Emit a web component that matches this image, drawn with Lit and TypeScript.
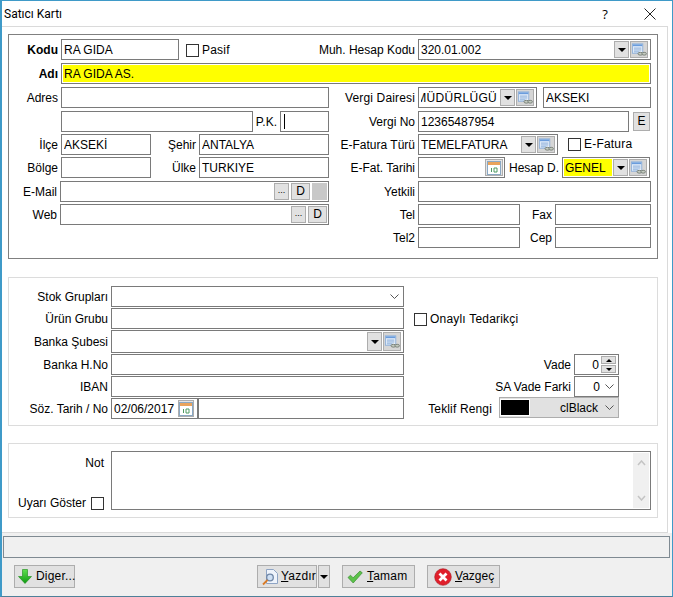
import { LitElement, html, css, svg } from "lit";
import { customElement } from "lit/decorators.js";

const ddIcon = html`<span class="btn dd"><i class="tri"></i></span>`;
const lookup = html`<span class="btn lk"><svg width="17" height="15" viewBox="0 0 17 15">
  <rect x="1.500" y="1.500" width="11" height="10" fill="#e8f0fa" stroke="#8fb0d8"/>
  <rect x="2" y="2" width="10" height="2" fill="#6a9cdc"/>
  <path d="M3 6h8M3 8h8M3 10h6" stroke="#7fa6d6"/>
  <ellipse cx="10" cy="12" rx="2.600" ry="1.500" fill="#c4cbc0" stroke="#777f77"/>
  <ellipse cx="14" cy="12" rx="2.400" ry="1.500" fill="#c4cbc0" stroke="#777f77"/>
</svg></span>`;
const calIcon = svg`<svg width="14" height="15" viewBox="0 0 14 15">
  <rect x=".5" y="1.500" width="13" height="13" fill="#fff" stroke="#8aa8c4"/>
  <rect x="1" y="2" width="12" height="3" fill="#e9a45c"/>
  <path d="M4.500 8v4M7 8h3v4H7z" stroke="#4f9a62" fill="none"/>
</svg>`;
const cal = html`<span class="btn cal">${calIcon}</span>`;
const chev = html`<svg class="chev" width="9" height="5" viewBox="0 0 9 5"><path d="M.5.5l4 4 4-4" fill="none" stroke="#555"/></svg>`;

@customElement("app-root")
export class AppRoot extends LitElement {
  static styles = css`
    :host { display: block; width: 673px; height: 597px; font: 12px/21px "Liberation Sans", Arial, sans-serif; color: #000; }
    * { box-sizing: border-box; }
    .win { width: 673px; height: 597px; display: flex; flex-direction: column; background: #fff; border: 1px solid #3f9ac8; border-bottom-color: #4f8099; border-left-width: 2px; }
    .title { height: 25px; flex: none; display: flex; align-items: center; padding-left: 2px; font: 12px Roboto, sans-serif; }
    .title .sp { flex: 1; }
    .help { width: 12px; text-align: center; font: 13px "Open Sans", sans-serif; margin-right: 33px; }
    .close { margin-right: 16px; display: block; }
    .main { height: 507px; width: 666px; flex: none; border: 1px solid #dadada; border-left: 0; padding: 7px 0 0 6px; }
    .group { width: 650px; border: 1px solid #dcdcdc; }
    .g1 { border-color: #808080; height: 225px; padding-top: 4px; display: grid; grid-template-columns: 321px 321px; grid-template-rows: 24px 24px 24px 23px 23px 24px 23px 23px 21px; }
    .g2 { margin-top: 18px; height: 149px; padding-top: 8px; display: grid; grid-template-columns: 395px 215px; grid-template-rows: 22px 22px 24px 22px 22px 21px; }
    .g3 { margin-top: 17px; height: 75px; padding: 7px 0 0; display: flex; }
    .r { display: flex; height: 21px; min-width: 0; }
    .span2 { grid-column: 1 / 3; }
    .l { flex: none; display: flex; justify-content: flex-end; padding: 1px 3px 0 0; white-space: nowrap; }
    .ls { letter-spacing: .15px; }
    .b { font-weight: 700; }
    .f { flex: none; height: 21px; border: 1px solid #7a7a7a; background: #fff; display: flex; align-items: center; padding: 0 1px 0 2px; overflow: hidden; white-space: nowrap; }
    .f .t { flex: 1; min-width: 0; overflow: hidden; display: flex; padding-top: 1px; }
    .f .t.end { justify-content: flex-end; padding-right: 2px; letter-spacing: .3px; }
    .f.y { padding: 1px; }
    .y .t { background: #ff0; height: 17px; line-height: 17px; padding-left: 1px; }
    .caret { display: block; width: 1px; height: 15px; background: #000; margin-left: 1px; flex: none; }
    .h23 { height: 23px; line-height: 23px; }
    .h23 .btn { height: 19px; }
    .btn { flex: none; height: 17px; background: #e1e1e1; border: 1px solid #adadad; display: flex; align-items: center; justify-content: center; font-size: 12px; margin-left: 1px; }
    .dd { width: 15px; margin-right: 1px; }
    .tri { width: 0; height: 0; border: 4px solid transparent; border-top: 4px solid #000; border-bottom: 0; }
    .lk { width: 18px; background: #d6d6d6; margin-right: 1px; margin-left: 0; }
    .cal { width: 18px; background: #e4e4e4; }
    .cal.sm { width: 16px; margin-right: 2px; }
    .dots { width: 15px; line-height: 10px; font-size: 9px; padding-bottom: 3px; margin-left: 2px; }
    .dbtn { width: 19px; margin-left: 2px; }
    .gray { width: 15px; background: #c8c8c8; border-color: #c8c8c8; margin-left: 2px; }
    .e { margin: 1px 0 0 4px; width: 17px; height: 19px; }
    .chk { display: flex; align-items: center; gap: 3px; white-space: nowrap; letter-spacing: .2px; }
    .p1 { padding-top: 2px; }
    .cb { flex: none; display: block; width: 13px; height: 13px; border: 1px solid #333; background: #fff; }
    .ml7 { margin-left: 7px; }
    .ml10 { margin-left: 10px; }
    .w27 { width: 27px; } .w35 { width: 35px; } .w48 { width: 48px; } .w49 { width: 49px; }
    .w51 { width: 51px; } .w52 { width: 52px; } .w57 { width: 57px; } .w87 { width: 87px; }
    .w88 { width: 88px; } .w90 { width: 90px; } .w96 { width: 96px; } .w102 { width: 102px; }
    .w108 { width: 108px; } .w118 { width: 118px; } .w119 { width: 119px; } .w130 { width: 130px; }
    .w140 { width: 140px; } .w192 { width: 192px; } .w206 { width: 206px; } .w211 { width: 211px; }
    .w233 { width: 233px; } .w268 { width: 268px; } .w269 { width: 269px; } .w293 { width: 293px; } .w590 { width: 590px; }
    .ml6 { margin-left: 6px; }
    .chev { flex: none; margin: 0 3px 0 5px; display: block; }
    .num { width: 45px; padding-right: 1px; }
    .num .t { justify-content: flex-end; }
    .spin { display: flex; flex-direction: column; gap: 1px; margin: 0 1px 0 2px; width: 15px; flex: none; }
    .spin span { height: 8px; background: #e1e1e1; border: 1px solid #adadad; display: flex; align-items: center; justify-content: center; }
    .up { width: 0; height: 0; border: 3px solid transparent; border-bottom: 3px solid #000; border-top: 0; }
    .dn { width: 0; height: 0; border: 3px solid transparent; border-top: 3px solid #000; border-bottom: 0; }
    .color { width: 120px; height: 21px; margin: -1px 0 0 4px; background: #e1e1e1; border: 1px solid #adadad; display: flex; align-items: center; }
    .color .chev { margin: 0 4px 0 7px; }
    .sw { width: 30px; height: 17px; background: #000; border: 1px solid #fff; flex: none; }
    .color .n { flex: 1; text-align: right; padding-top: 1px; }
    .end { justify-content: flex-end; }
    .side { width: 102px; flex: none; display: flex; flex-direction: column; justify-content: space-between; align-items: flex-end; padding: 2px 7px 0 0; height: 59px; }
    .side .not { line-height: 21px; }
    .side .uy { display: flex; align-items: center; gap: 5px; height: 14px; }
    .memo { width: 540px; height: 59px; border: 1px solid #7a7a7a; display: flex; justify-content: flex-end; padding: 1px; }
    .sb { width: 16px; background: #f0f0f0; display: flex; flex-direction: column; justify-content: space-between; align-items: center; padding: 7px 0; }
    .foot { flex: 1; background: #f0f0f0; padding: 3px 1px 0 1px; }
    .status { width: 667px; height: 22px; border: 1px solid #7f8a92; }
    .bar { display: flex; margin-top: 7px; padding-left: 11px; }
    .pb { height: 23px; flex: none; background: #e1e1e1; border: 1px solid #adadad; display: flex; align-items: center; padding-left: 3px; gap: 3px; letter-spacing: .2px; white-space: nowrap; }
    .pb u { text-decoration: underline; }
    .pb svg { flex: none; display: block; }
    .diger { width: 61px; gap: 4px; }
    .yaz { width: 60px; margin-left: 182px; gap: 1px; }
    .arr { width: 12px; margin-left: 1px; justify-content: center; padding: 0; }
    .tam { width: 73px; margin-left: 12px; padding-left: 4px; gap: 4px; }
    .vaz { width: 73px; margin-left: 12px; padding-left: 6px; gap: 3px; letter-spacing: 0; }
  `;

  render() {
    return html`<div class="win">
      <div class="title"><span>Satıcı Kartı</span><span class="sp"></span><span class="help">?</span>
        <svg class="close" width="12" height="12" viewBox="0 0 12 12"><path d="M.5.5l11 11M11.500.5l-11 11" stroke="#222" fill="none"/></svg></div>
      <div class="main">
        <div class="group g1">
          <div class="r"><span class="l b w52">Kodu</span><div class="f w118"><span class="t">RA GIDA</span></div>
            <label class="chk ml7 p1"><i class="cb"></i>Pasif</label></div>
          <div class="r"><span class="l w88">Muh. Hesap Kodu</span><div class="f w233"><span class="t">320.01.002</span>${ddIcon}${lookup}</div></div>
          <div class="r span2"><span class="l b w52">Adı</span><div class="f y w590"><span class="t">RA GIDA AS.</span></div></div>
          <div class="r"><span class="l w52">Adres</span><div class="f w268"></div></div>
          <div class="r"><span class="l w88 ls">Vergi Dairesi</span><div class="f w119"><span class="t end">MÜDÜRLÜGÜ</span>${ddIcon}${lookup}</div><div class="f w108 ml6"><span class="t">AKSEKI</span></div></div>
          <div class="r"><span class="l w52"></span><div class="f w192"></div><span class="l w27">P.K.</span><div class="f w49"><i class="caret"></i></div></div>
          <div class="r"><span class="l w88">Vergi No</span><div class="f w211"><span class="t">12365487954</span></div><span class="btn e">E</span></div>
          <div class="r"><span class="l w52">İlçe</span><div class="f w90"><span class="t">AKSEKİ</span></div><span class="l w48">Şehir</span><div class="f w130"><span class="t">ANTALYA</span></div></div>
          <div class="r"><span class="l w88">E-Fatura Türü</span><div class="f w140"><span class="t">TEMELFATURA</span>${ddIcon}${lookup}</div><label class="chk ml10"><i class="cb"></i>E-Fatura</label></div>
          <div class="r"><span class="l w52">Bölge</span><div class="f w90"></div><span class="l w48">Ülke</span><div class="f w130"><span class="t">TURKIYE</span></div></div>
          <div class="r"><span class="l w88">E-Fat. Tarihi</span><div class="f w87"><span class="t"></span>${cal}</div><span class="l w57">Hesap D.</span><div class="f y w88"><span class="t">GENEL</span>${ddIcon}${lookup}</div></div>
          <div class="r"><span class="l w51">E-Mail</span><div class="f w269"><span class="t"></span><span class="btn dots">...</span><span class="btn dbtn">D</span><span class="btn gray"></span></div></div>
          <div class="r"><span class="l w88">Yetkili</span><div class="f w233"></div></div>
          <div class="r"><span class="l w51">Web</span><div class="f w269"><span class="t"></span><span class="btn dots">...</span><span class="btn dbtn">D</span></div></div>
          <div class="r"><span class="l w88">Tel</span><div class="f w102"></div><span class="l w35">Fax</span><div class="f w96"></div></div>
          <div class="r"></div>
          <div class="r"><span class="l w88">Tel2</span><div class="f w102"></div><span class="l w35">Cep</span><div class="f w96"></div></div>
        </div>

        <div class="group g2">
          <div class="r"><span class="l w102">Stok Grupları</span><div class="f w293"><span class="t"></span>${chev}</div></div>
          <div class="r"></div>
          <div class="r"><span class="l w102">Ürün Grubu</span><div class="f w293"></div></div>
          <div class="r"><label class="chk ml10 p1"><i class="cb"></i>Onaylı Tedarikçi</label></div>
          <div class="r h23"><span class="l w102">Banka Şubesi</span><div class="f w293 h23"><span class="t"></span>${ddIcon}${lookup}</div></div>
          <div class="r"></div>
          <div class="r"><span class="l w102">Banka H.No</span><div class="f w293"></div></div>
          <div class="r end"><span class="l">Vade</span><div class="f num"><span class="t">0</span><span class="spin"><span><i class="up"></i></span><span><i class="dn"></i></span></span></div></div>
          <div class="r"><span class="l w102">IBAN</span><div class="f w293"></div></div>
          <div class="r end"><span class="l">SA Vade Farki</span><div class="f num"><span class="t">0</span>${chev}</div></div>
          <div class="r"><span class="l w102">Söz. Tarih / No</span><div class="f w87"><span class="t">02/06/2017</span><span class="btn cal sm">${calIcon}</span></div><div class="f w206"></div></div>
          <div class="r end"><span class="l ls">Teklif Rengi</span><div class="color"><i class="sw"></i><span class="n">clBlack</span>${chev}</div></div>
        </div>

        <div class="group g3">
          <div class="side"><span class="not">Not</span><span class="uy">Uyarı Göster <i class="cb"></i></span></div>
          <div class="memo"><div class="sb">
            <svg width="9" height="6" viewBox="0 0 9 6"><path d="M1 5l3.500-4 3.500 4" fill="none" stroke="#c4c4c4" stroke-width="1.500"/></svg>
            <svg width="9" height="6" viewBox="0 0 9 6"><path d="M1 1l3.500 4 3.500-4" fill="none" stroke="#c4c4c4" stroke-width="1.500"/></svg>
          </div></div>
        </div>
      </div>
      <div class="foot">
        <div class="status"></div>
        <div class="bar">
          <div class="pb diger">
            <svg width="14" height="15" viewBox="0 0 14 15"><defs><linearGradient id="gd" x1="0" y1="0" x2="0" y2="1"><stop offset="0" stop-color="#5fe04f"/><stop offset="1" stop-color="#0f9a12"/></linearGradient></defs><path d="M4.500.5h5v7h4L7 14.500.5 7.500h4z" fill="url(#gd)" stroke="#1a8a16" stroke-width=".6"/></svg>
            <span>Di<u>g</u>er...</span></div>
          <div class="pb yaz">
            <svg width="19" height="18" viewBox="0 0 19 18"><path d="M5.500 1.500h7l4 4v10h-11z" fill="#eef3fb" stroke="#8ea4c4"/><circle cx="9" cy="9.500" r="3.300" fill="#cfe0f4" stroke="#6f86a6" stroke-width="1.300"/><path d="M6.500 12l-4.500 4.500" stroke="#d97b27" stroke-width="1.800"/></svg>
            <span><u>Y</u>azdır</span></div>
          <div class="pb arr"><i class="tri"></i></div>
          <div class="pb tam">
            <svg width="16" height="14" viewBox="0 0 16 14"><path d="M1 7.500l2.500-2.300 2.600 2.600L13 1l2.300 1.800L6.200 13z" fill="#5cc24a" stroke="#3b8e32" stroke-width=".7"/></svg>
            <span><u>T</u>amam</span></div>
          <div class="pb vaz">
            <svg width="18" height="18" viewBox="0 0 18 18"><circle cx="9" cy="9" r="8.300" fill="#e01f2b" stroke="#a81820" stroke-width=".6"/><path d="M5.500 5.500l7 7M12.500 5.500l-7 7" stroke="#fff" stroke-width="2.800"/></svg>
            <span><u>V</u>azgeç</span></div>
        </div>
      </div>
    </div>`;
  }
}
